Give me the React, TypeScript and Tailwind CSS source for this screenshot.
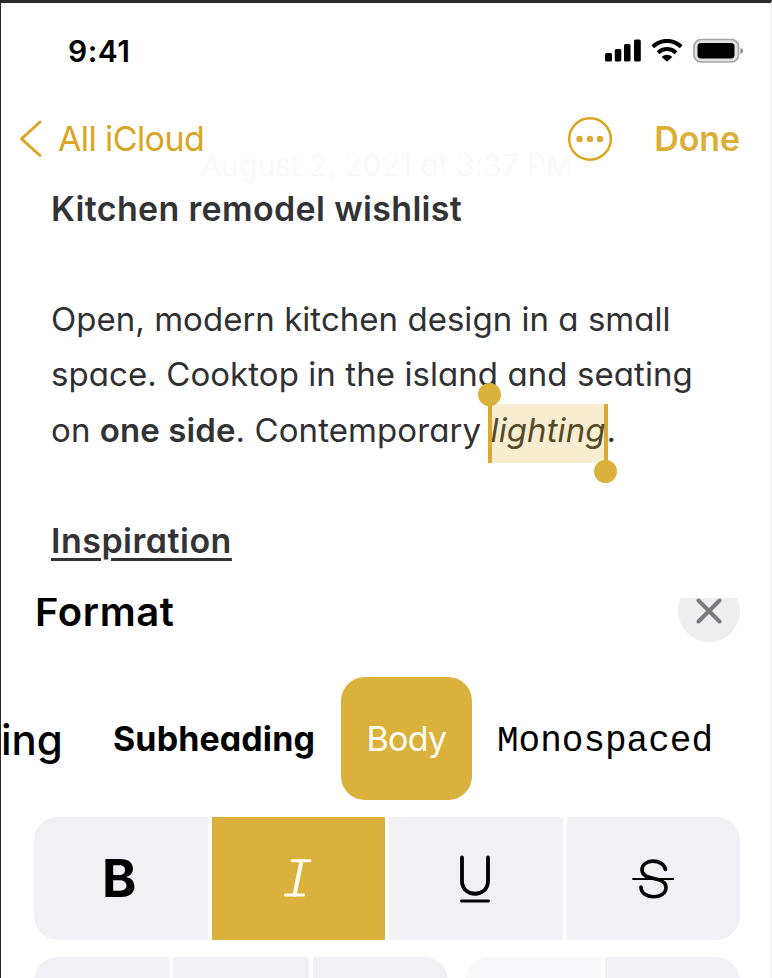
import React from "react";

const alt = "[font-feature-settings:'cv11']";

function StatusBar() {
  return (
    <div className="flex h-12 items-center justify-between pr-[27px] pl-[67px] text-black">
      <span className="text-[30px] leading-none font-semibold tracking-[0.5px]">9:41</span>
      <div className="flex items-center">
        <svg width="36" height="24" viewBox="0 0 36 24" fill="#000">
          <rect x="0" y="14" width="7" height="8.500" rx="1.600" />
          <rect x="9.800" y="10" width="6.500" height="12.500" rx="1.600" />
          <rect x="19" y="5" width="6.500" height="17.500" rx="1.600" />
          <rect x="29" y="0.500" width="6.800" height="22" rx="1.600" />
        </svg>
        <svg className="ml-[10px]" width="32" height="24" viewBox="0 0 32 24" fill="none" stroke="#000" strokeWidth="4">
          <path d="M1.800 7.800C10 -.1 22 -.1 30.200 7.800" />
          <path d="M7 13.700C12.300 8.800 19.700 8.800 25 13.700" />
          <path d="M10.700 18C14 15 18 15 21.300 18L16 22.800Z" fill="#000" stroke="none" />
        </svg>
        <svg className="ml-[10px]" width="51" height="26" viewBox="0 0 51 26">
          <rect x="1" y="1.500" width="44.500" height="22.500" rx="7" fill="#e2e2e2" stroke="#a6a6a6" strokeWidth="1.700" />
          <rect x="4.500" y="5" width="37" height="15.500" rx="3.500" fill="#000" />
          <path d="M47.500 10C50.800 11 50.800 15 47.500 16Z" fill="#8a8a8a" />
        </svg>
      </div>
    </div>
  );
}

function NavBar() {
  return (
    <div className="relative mt-8 flex h-16 items-center pl-[18px] text-[34px] leading-none text-[#daa520]">
      <svg width="24" height="40" viewBox="0 0 24 40" fill="none" stroke="#dba726" strokeWidth="3" strokeLinecap="round" strokeLinejoin="round">
        <path d="M21 3L2.500 19.800L21 36.500" />
      </svg>
      <span className="ml-[15px] font-normal tracking-[-0.6px]">All iCloud</span>
      <svg className="ml-auto" width="46" height="46" viewBox="0 0 46 46">
        <circle cx="23" cy="23" r="20.800" fill="none" stroke="#daa520" strokeWidth="2.500" />
        <circle cx="12.500" cy="23" r="3.200" fill="#dba932" />
        <circle cx="23" cy="23" r="3.200" fill="#dba932" />
        <circle cx="33" cy="23" r="3.200" fill="#dba932" />
      </svg>
      <span className="mr-[31px] ml-[41px] font-semibold tracking-[-0.1px] text-[#dbae36]">Done</span>
      <span className={`absolute top-[43px] left-[200px] text-[30px] font-light tracking-[0.15px] whitespace-nowrap text-[#f9f9f9] ${alt}`}>
        August 2, 2021 at 3:37 PM
      </span>
    </div>
  );
}

function Selection({ children }: { children: React.ReactNode }) {
  return (
    <span className="relative top-[3px] -ml-[3px] inline-flex h-[59px] w-[120px] items-center border-x-4 border-[#daa934] bg-[#f7eed2] leading-none text-[#554a28] italic">
      <span className="-mt-[6px] -ml-px">{children}</span>
      <span className="absolute -top-[21px] -left-[14px] size-[23px] rounded-full bg-[#dab13c]" />
      <span className="absolute -right-[13px] -bottom-[20px] size-[23px] rounded-full bg-[#dab13c]" />
    </span>
  );
}

function Note() {
  return (
    <div className={`mt-[10.5px] h-[416.5px] pl-[50px] text-[33px] font-normal whitespace-nowrap text-[#303032] ${alt}`}>
      <h1 className="h-[55px] text-[34px] leading-[54px] font-semibold tracking-[0.33px] text-[#333335] [font-feature-settings:normal]">Kitchen remodel wishlist</h1>
      <div className="mt-[55.5px]">
        <p className="h-[54.5px] leading-[55.5px] tracking-[0.03px]">Open, modern kitchen design in a small</p>
        <p className="h-[56.5px] leading-[55.5px] tracking-[0.07px]">space. Cooktop in the island and seating</p>
        <p className="flex h-[55.5px] items-center leading-[55.5px] tracking-[0.09px]">
          <span className="whitespace-pre">on <b className="font-semibold text-[#333335]">one side</b>. Contemporary </span>
          <Selection>lighting</Selection>
          <span className="-ml-px">.</span>
        </p>
      </div>
      <h2 className="mt-[55.5px] h-[55px] text-[34px] leading-[54px] font-semibold tracking-[0.5px] text-[#333335] underline decoration-[3px] underline-offset-[5px]">Inspiration</h2>
    </div>
  );
}

function FormatHeader() {
  return (
    <div className="h-[79px] overflow-hidden">
      <div className="-mt-[18px] flex h-[62px] items-center justify-between pr-[31px] pl-[34px]">
        <h2 className="mt-[2px] text-[40px] leading-none font-semibold tracking-[0.6px] text-black">Format</h2>
        <button className="flex size-[62px] items-center justify-center rounded-full bg-[#eeeeef]">
          <svg width="28" height="28" viewBox="0 0 28 28" stroke="#7b7b7f" strokeWidth="4" strokeLinecap="round">
            <path d="M3.500 3.500L24.500 24.500M24.500 3.500L3.500 24.500" />
          </svg>
        </button>
      </div>
    </div>
  );
}

function StyleRow() {
  return (
    <div className="flex h-[123px] items-center overflow-hidden whitespace-nowrap text-black">
      <span className={`mt-[2px] w-[112px] text-[42px] leading-none font-medium ${alt}`}>ing</span>
      <span className={`w-[228px] text-[34px] leading-none font-bold tracking-[0.1px] ${alt}`}>Subheading</span>
      <span className="flex h-[123px] w-[131px] items-center justify-center rounded-[24px] bg-[#dab13c] text-[34px] font-normal tracking-[-0.7px] text-[#fffdf4]">Body</span>
      <span className="mt-[7px] ml-[25px] font-['Liberation_Mono',monospace] text-[36px] leading-none">Monospaced</span>
    </div>
  );
}

function MarkRow() {
  return (
    <div className="mt-[17px] mr-[31px] ml-[33px] grid h-[123px] grid-cols-4 gap-1 overflow-hidden rounded-[24px] text-black [&>*]:flex [&>*]:items-center [&>*]:justify-center">
      <div className="bg-[#f1f0f5] text-[52px] font-bold">
        <span className="-ml-[3px]">B</span>
      </div>
      <div className="bg-[#dab13c]">
        <svg width="28" height="40" viewBox="0 0 28 40" fill="none" stroke="#fffdf2" strokeLinecap="round">
          <path d="M8 1.800H26M1.500 36H19.500" strokeWidth="3" />
          <path d="M17.500 2L10.500 36" strokeWidth="4" />
        </svg>
      </div>
      <div className="bg-[#f1f0f5]">
        <svg className="-ml-px" width="32" height="48" viewBox="0 0 32 48" fill="none" stroke="#000" strokeLinecap="round">
          <path d="M3 2.500V26C3 43 29 43 29 26V2.500" strokeWidth="3.800" />
          <path d="M2.500 46H29.500" strokeWidth="2.800" />
        </svg>
      </div>
      <div className="bg-[#f1f0f5]">
        <svg className="-ml-px" width="42" height="40" viewBox="0 0 42 40" fill="none" stroke="#000" strokeLinecap="round">
          <path d="M33.500 10.500C31-.8 10-.8 10 11C10 22.500 34 16.500 34 28.500C34 41 9 41 9 28" strokeWidth="3.600" />
          <path d="M1.200 20H41" strokeWidth="2.200" />
        </svg>
      </div>
    </div>
  );
}

function ListRow() {
  return (
    <div className="mt-[17px] mr-[31px] ml-[33px] flex h-[60px] justify-between">
      <div className="grid w-[414px] grid-cols-3 gap-1 overflow-hidden rounded-[24px]">
        <div className="bg-[#f1f0f5]" />
        <div className="bg-[#f1f0f5]" />
        <div className="bg-[#f1f0f5]" />
      </div>
      <div className="grid w-[275px] grid-cols-2 gap-1 overflow-hidden rounded-[24px]">
        <div className="bg-[#f8f8fb]" />
        <div className="bg-[#f1f0f5]" />
      </div>
    </div>
  );
}

export default function App() {
  return (
    <main className="h-[978px] w-[772px] overflow-hidden border-t-[3px] border-r border-l border-t-[#2b292a] border-r-[#f1f1f1] border-l-[#2b292a] bg-white pt-6 font-[Inter,sans-serif]">
      <StatusBar />
      <NavBar />
      <Note />
      <FormatHeader />
      <StyleRow />
      <MarkRow />
      <ListRow />
    </main>
  );
}
